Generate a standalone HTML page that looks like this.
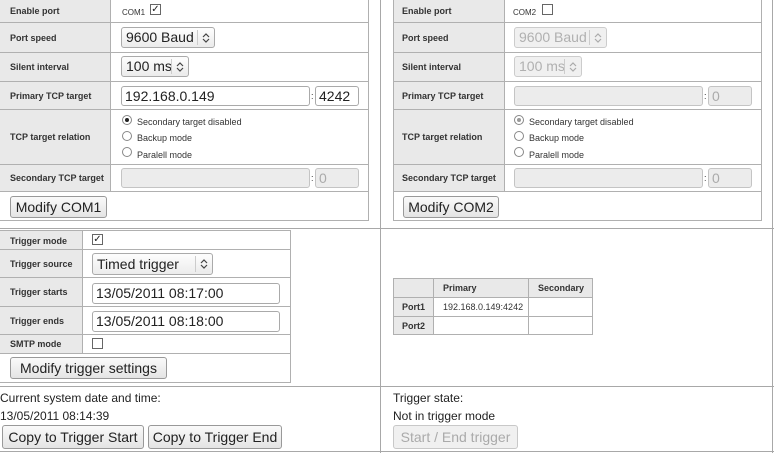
<!DOCTYPE html>
<html><head><meta charset="utf-8"><style>
*{box-sizing:border-box;margin:0;padding:0}
body{width:774px;height:453px;position:relative;background:#fff;font-family:"Liberation Sans",sans-serif;overflow:hidden;color:#222}
div,span,svg{position:absolute}
.l{background:#e9e9e9;border:1px solid #b0b0b0}
.c{background:#fff;border:1px solid #b0b0b0}
.lb{font-weight:bold;font-size:9px;color:#333;white-space:nowrap}
.in{border:1px solid #aaa;border-radius:3px;background:#fff;font-size:14px;padding-left:3px;line-height:18px;white-space:nowrap}
.dis{background:#ececec;color:#aaa;border-color:#c4c4c4}
.sel{border:1px solid #aaa;border-radius:3px;background:linear-gradient(#fdfdfd,#ececec);font-size:14px;padding-left:4px;white-space:nowrap}
.sel.dis{color:#b0b0b0;background:#f0f0f0;border-color:#ccc}
.ar{right:0;top:2px;bottom:2px;width:17px;border-left:1px solid #ccc;background:inherit}
.ar svg{left:4px;top:50%;margin-top:-5px}
.btn{border:1px solid #999;border-radius:3px;background:linear-gradient(#fafafa,#e4e4e4);font-size:14px;text-align:center;white-space:nowrap}
.rad{width:10px;height:10px;border:1px solid #888;border-radius:50%;background:#fff}
.rt{font-size:9px;color:#333;white-space:nowrap}
.cb{width:11px;height:11px;border:1px solid #666;background:#fff;font-size:10px;line-height:9px;text-align:center}
.hl{height:1px;background:#a8a8a8}
.vl{width:1px;background:#a8a8a8}
.t{font-size:12px;white-space:nowrap}
</style></head><body>

<div class="vl" style="left:380px;top:0;height:453px"></div>
<div class="vl" style="left:772px;top:0;height:453px"></div>
<div class="hl" style="left:0;top:228px;width:774px"></div>
<div class="hl" style="left:0;top:386px;width:774px"></div>
<div class="hl" style="left:0;top:451px;width:774px"></div>

<!-- COM1 table -->
<div class="l" style="left:-1px;top:-1px;width:112px;height:24px"></div><div class="c" style="left:110px;top:-1px;width:259px;height:24px"></div>
<div class="l" style="left:-1px;top:22px;width:112px;height:31px"></div><div class="c" style="left:110px;top:22px;width:259px;height:31px"></div>
<div class="l" style="left:-1px;top:52px;width:112px;height:30px"></div><div class="c" style="left:110px;top:52px;width:259px;height:30px"></div>
<div class="l" style="left:-1px;top:81px;width:112px;height:29px"></div><div class="c" style="left:110px;top:81px;width:259px;height:29px"></div>
<div class="l" style="left:-1px;top:109px;width:112px;height:56px"></div><div class="c" style="left:110px;top:109px;width:259px;height:56px"></div>
<div class="l" style="left:-1px;top:164px;width:112px;height:28px"></div><div class="c" style="left:110px;top:164px;width:259px;height:28px"></div>
<div class="c" style="left:-1px;top:191px;width:370px;height:30px"></div>
<span class="lb" style="left:10px;top:6px">Enable port</span>
<span class="lb" style="left:10px;top:33px">Port speed</span>
<span class="lb" style="left:10px;top:62px">Silent interval</span>
<span class="lb" style="left:10px;top:91px">Primary TCP target</span>
<span class="lb" style="left:10px;top:132px">TCP target relation</span>
<span class="lb" style="left:10px;top:173px">Secondary TCP target</span>
<span class="rt" style="left:122px;top:8px;font-size:8px">COM1</span><div class="cb" style="left:150px;top:4px">✓</div>
<div class="sel" style="left:121px;top:27px;width:94px;height:21px;line-height:19px">9600 Baud<span class="ar"><svg width="8" height="10" viewBox="0 0 8 10"><path d="M1 4L4 1L7 4M1 6L4 9L7 6" fill="none" stroke="#444" stroke-width="1.2"/></svg></span></div>
<div class="sel" style="left:121px;top:56px;width:68px;height:21px;line-height:19px">100 ms<span class="ar"><svg width="8" height="10" viewBox="0 0 8 10"><path d="M1 4L4 1L7 4M1 6L4 9L7 6" fill="none" stroke="#444" stroke-width="1.2"/></svg></span></div>
<div class="in" style="left:121px;top:86px;width:189px;height:20px">192.168.0.149</div><span class="rt" style="left:311px;top:91px">:</span>
<div class="in" style="left:315px;top:86px;width:44px;height:20px">4242</div>
<div class="rad" style="left:122px;top:115px"><span style="left:2px;top:2px;width:4px;height:4px;border-radius:50%;background:#222"></span></div><span class="rt" style="left:137px;top:117px">Secondary target disabled</span>
<div class="rad" style="left:122px;top:131px"></div><span class="rt" style="left:137px;top:133px">Backup mode</span>
<div class="rad" style="left:122px;top:147px"></div><span class="rt" style="left:137px;top:150px">Paralell mode</span>
<div class="in dis" style="left:121px;top:168px;width:189px;height:20px"></div><span class="rt" style="left:311px;top:173px">:</span>
<div class="in dis" style="left:315px;top:168px;width:44px;height:20px">0</div>
<div class="btn" style="left:10px;top:196px;width:97px;height:22px;line-height:20px">Modify COM1</div>

<!-- COM2 table -->
<div class="l" style="left:393px;top:-1px;width:112px;height:24px"></div><div class="c" style="left:504px;top:-1px;width:258px;height:24px"></div>
<div class="l" style="left:393px;top:22px;width:112px;height:31px"></div><div class="c" style="left:504px;top:22px;width:258px;height:31px"></div>
<div class="l" style="left:393px;top:52px;width:112px;height:30px"></div><div class="c" style="left:504px;top:52px;width:258px;height:30px"></div>
<div class="l" style="left:393px;top:81px;width:112px;height:29px"></div><div class="c" style="left:504px;top:81px;width:258px;height:29px"></div>
<div class="l" style="left:393px;top:109px;width:112px;height:56px"></div><div class="c" style="left:504px;top:109px;width:258px;height:56px"></div>
<div class="l" style="left:393px;top:164px;width:112px;height:28px"></div><div class="c" style="left:504px;top:164px;width:258px;height:28px"></div>
<div class="c" style="left:393px;top:191px;width:369px;height:30px"></div>
<span class="lb" style="left:402px;top:6px">Enable port</span>
<span class="lb" style="left:402px;top:33px">Port speed</span>
<span class="lb" style="left:402px;top:62px">Silent interval</span>
<span class="lb" style="left:402px;top:91px">Primary TCP target</span>
<span class="lb" style="left:402px;top:132px">TCP target relation</span>
<span class="lb" style="left:402px;top:173px">Secondary TCP target</span>
<span class="rt" style="left:513px;top:8px;font-size:8px">COM2</span><div class="cb" style="left:542px;top:4px"></div>
<div class="sel dis" style="left:514px;top:27px;width:93px;height:21px;line-height:19px">9600 Baud<span class="ar"><svg width="8" height="10" viewBox="0 0 8 10"><path d="M1 4L4 1L7 4M1 6L4 9L7 6" fill="none" stroke="#aaa" stroke-width="1.2"/></svg></span></div>
<div class="sel dis" style="left:514px;top:56px;width:68px;height:21px;line-height:19px">100 ms<span class="ar"><svg width="8" height="10" viewBox="0 0 8 10"><path d="M1 4L4 1L7 4M1 6L4 9L7 6" fill="none" stroke="#aaa" stroke-width="1.2"/></svg></span></div>
<div class="in dis" style="left:514px;top:86px;width:189px;height:20px"></div><span class="rt" style="left:704px;top:91px">:</span>
<div class="in dis" style="left:708px;top:86px;width:44px;height:20px">0</div>
<div class="rad" style="left:514px;top:115px"><span style="left:2px;top:2px;width:4px;height:4px;border-radius:50%;background:#999"></span></div><span class="rt" style="left:529px;top:117px">Secondary target disabled</span>
<div class="rad" style="left:514px;top:131px"></div><span class="rt" style="left:529px;top:133px">Backup mode</span>
<div class="rad" style="left:514px;top:147px"></div><span class="rt" style="left:529px;top:150px">Paralell mode</span>
<div class="in dis" style="left:514px;top:168px;width:189px;height:20px"></div><span class="rt" style="left:704px;top:173px">:</span>
<div class="in dis" style="left:708px;top:168px;width:44px;height:20px">0</div>
<div class="btn" style="left:403px;top:196px;width:96px;height:22px;line-height:20px">Modify COM2</div>

<!-- Trigger table -->
<div class="l" style="left:-1px;top:230px;width:84px;height:20px"></div><div class="c" style="left:82px;top:230px;width:209px;height:20px"></div>
<div class="l" style="left:-1px;top:249px;width:84px;height:29px"></div><div class="c" style="left:82px;top:249px;width:209px;height:29px"></div>
<div class="l" style="left:-1px;top:277px;width:84px;height:30px"></div><div class="c" style="left:82px;top:277px;width:209px;height:30px"></div>
<div class="l" style="left:-1px;top:306px;width:84px;height:29px"></div><div class="c" style="left:82px;top:306px;width:209px;height:29px"></div>
<div class="l" style="left:-1px;top:334px;width:84px;height:20px"></div><div class="c" style="left:82px;top:334px;width:209px;height:20px"></div>
<div class="c" style="left:-1px;top:353px;width:292px;height:30px"></div>
<span class="lb" style="left:10px;top:236px">Trigger mode</span>
<span class="lb" style="left:10px;top:259px">Trigger source</span>
<span class="lb" style="left:10px;top:287px">Trigger starts</span>
<span class="lb" style="left:10px;top:316px">Trigger ends</span>
<span class="lb" style="left:10px;top:339px">SMTP mode</span>
<div class="cb" style="left:92px;top:234px">✓</div>
<div class="sel" style="left:92px;top:253px;width:121px;height:22px;line-height:20px">Timed trigger<span class="ar"><svg width="8" height="10" viewBox="0 0 8 10"><path d="M1 4L4 1L7 4M1 6L4 9L7 6" fill="none" stroke="#444" stroke-width="1.2"/></svg></span></div>
<div class="in" style="left:92px;top:283px;width:188px;height:21px">13/05/2011 08:17:00</div>
<div class="in" style="left:92px;top:311px;width:188px;height:21px">13/05/2011 08:18:00</div>
<div class="cb" style="left:92px;top:338px"></div>
<div class="btn" style="left:10px;top:357px;width:157px;height:22px;line-height:20px">Modify trigger settings</div>

<!-- status table -->
<div class="l" style="left:393px;top:278px;width:41px;height:20px"></div>
<div class="l" style="left:433px;top:278px;width:96px;height:20px"></div>
<div class="l" style="left:528px;top:278px;width:65px;height:20px"></div>
<div class="l" style="left:393px;top:297px;width:41px;height:20px"></div>
<div class="c" style="left:433px;top:297px;width:96px;height:20px"></div>
<div class="c" style="left:528px;top:297px;width:65px;height:20px"></div>
<div class="l" style="left:393px;top:316px;width:41px;height:19px"></div>
<div class="c" style="left:433px;top:316px;width:96px;height:19px"></div>
<div class="c" style="left:528px;top:316px;width:65px;height:19px"></div>
<span class="lb" style="left:443px;top:283px">Primary</span>
<span class="lb" style="left:538px;top:283px">Secondary</span>
<span class="lb" style="left:402px;top:302px">Port1</span>
<span class="lb" style="left:402px;top:321px">Port2</span>
<span class="rt" style="left:443px;top:302px">192.168.0.149:4242</span>

<!-- bottom -->
<span class="t" style="left:0;top:391px">Current system date and time:</span>
<span class="t" style="left:0;top:409px">13/05/2011 08:14:39</span>
<div class="btn" style="left:2px;top:425px;width:142px;height:24px;line-height:22px">Copy to Trigger Start</div>
<div class="btn" style="left:148px;top:425px;width:134px;height:24px;line-height:22px">Copy to Trigger End</div>
<span class="t" style="left:393px;top:391px">Trigger state:</span>
<span class="t" style="left:393px;top:409px">Not in trigger mode</span>
<div class="btn" style="left:393px;top:425px;width:125px;height:24px;line-height:22px;color:#aaa;border-color:#c8c8c8;background:#f0f0f0">Start / End trigger</div>
</body></html>
